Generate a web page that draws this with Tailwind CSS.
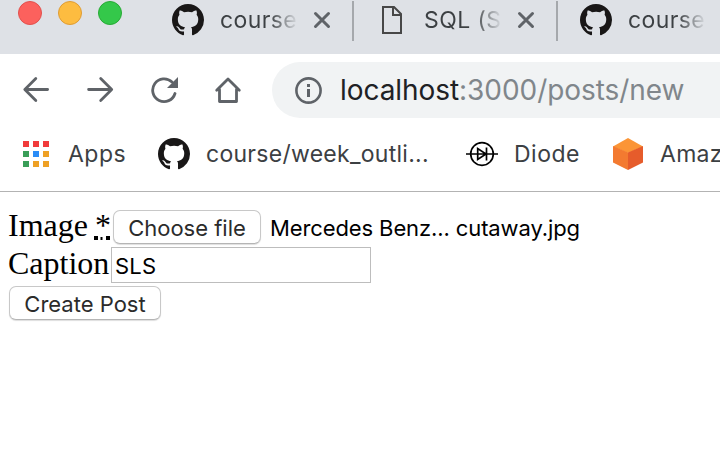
<!DOCTYPE html>
<html lang="en">
<head>
<meta charset="utf-8">
<title>New post</title>
<script src="https://cdn.jsdelivr.net/npm/@tailwindcss/browser@4"></script>
</head>
<body class="w-[720px] h-[470px] overflow-hidden bg-white font-['Inter',sans-serif] text-[#3c4043]">
<svg class="hidden">
  <symbol id="github" viewBox="0 0 16 16"><path fill="#191717" fill-rule="evenodd" d="M8 0C3.58 0 0 3.58 0 8c0 3.54 2.29 6.53 5.47 7.59.4.07.55-.17.55-.38 0-.19-.01-.82-.01-1.49-2.01.37-2.53-.49-2.69-.94-.09-.23-.48-.94-.82-1.13-.28-.15-.68-.52-.01-.53.63-.01 1.08.58 1.23.82.72 1.21 1.87.87 2.33.66.07-.52.28-.87.51-1.07-1.78-.2-3.64-.89-3.64-3.95 0-.87.31-1.59.82-2.15-.08-.2-.36-1.02.08-2.12 0 0 .67-.21 2.2.82.64-.18 1.32-.27 2-.27s1.36.09 2 .27c1.53-1.04 2.2-.82 2.2-.82.44 1.1.16 1.92.08 2.12.51.56.82 1.27.82 2.15 0 3.07-1.87 3.75-3.65 3.95.29.25.54.73.54 1.48 0 1.07-.01 1.93-.01 2.2 0 .21.15.46.55.38A8.01 8.01 0 0 0 16 8c0-4.42-3.58-8-8-8z"/></symbol>
  <symbol id="close" viewBox="0 0 18 18"><path d="M2.500 2.500 15.500 15.500M15.500 2.500 2.500 15.500" stroke="#5f6368" stroke-width="3" stroke-linecap="round"/></symbol>
</svg>

<header class="flex h-[54px] w-full overflow-hidden bg-[#dee1e6]">
  <div class="flex w-[172px] shrink-0 gap-4 pt-px pl-[18px]">
    <span class="size-6 rounded-full border border-[#e2504d] bg-[#fc615d]"></span>
    <span class="size-6 rounded-full border border-[#df9c34] bg-[#fdbc40]"></span>
    <span class="size-6 rounded-full border border-[#27aa35] bg-[#34c84a]"></span>
  </div>
  <div class="flex h-10 w-[180px] shrink-0 items-center">
    <svg class="size-8 shrink-0"><use href="#github"/></svg>
    <span class="ml-4 w-[80px] overflow-hidden whitespace-nowrap bg-linear-to-r from-[#3c4043] from-62% to-transparent to-98% bg-clip-text text-[23px] leading-8 tracking-[0.4px] text-transparent">course</span>
    <svg class="ml-[13px] size-[18px] shrink-0"><use href="#close"/></svg>
  </div>
  <div class="mt-px h-10 w-[2px] shrink-0 bg-[#a5a8ac]"></div>
  <div class="flex h-10 w-[202px] shrink-0 items-center pl-7">
    <svg class="h-7 w-5 shrink-0" viewBox="0 0 20 28" fill="none" stroke="#474747" stroke-width="2"><path d="M1 1H12L19 8V27H1ZM11 1V9H19"/></svg>
    <span class="ml-[22px] w-[80px] overflow-hidden whitespace-nowrap bg-linear-to-r from-[#3c4043] from-62% to-transparent to-98% bg-clip-text text-[23px] leading-8 tracking-[0.4px] text-transparent">SQL (S</span>
    <svg class="ml-[13px] size-[18px] shrink-0"><use href="#close"/></svg>
  </div>
  <div class="mt-px h-10 w-[2px] shrink-0 bg-[#a5a8ac]"></div>
  <div class="flex h-10 shrink-0 items-center pl-[22px]">
    <svg class="size-8 shrink-0"><use href="#github"/></svg>
    <span class="ml-4 w-[80px] overflow-hidden whitespace-nowrap bg-linear-to-r from-[#3c4043] from-62% to-transparent to-98% bg-clip-text text-[23px] leading-8 tracking-[0.4px] text-transparent">course</span>
  </div>
</header>

<nav class="flex h-[72px] w-full items-center overflow-hidden pl-[22px]">
  <svg class="h-7 w-[220px] shrink-0" viewBox="0 0 220 28" fill="none" stroke="#5f6368" stroke-width="2.800" stroke-linecap="round" stroke-linejoin="round">
    <path d="M13.800 2.600 2.800 13.500 13.800 24.400M3 13.500H25.600"/>
    <path d="M78.700 2.600 89.700 13.500 78.700 24.400M89.500 13.500H66.600"/>
    <path d="M153 17.500A11.400 11.400 0 1 1 150 6"/>
    <path d="M156 1V12H145Z" fill="#5f6368" stroke="none"/>
    <path d="M194.700 14.300 206 3 217.300 14.300M197.500 13.500V25.500H214.500V13.500"/>
  </svg>
  <div class="ml-[30px] flex h-14 flex-1 items-center rounded-l-full bg-[#f1f3f4] pl-[23px]">
    <svg class="size-7 shrink-0" viewBox="0 0 28 28"><circle cx="13.500" cy="14.500" r="12.100" fill="none" stroke="#5f6368" stroke-width="2.600"/><path d="M12 8h3v3h-3zM12 13h3v8h-3z" fill="#5f6368"/></svg>
    <span class="ml-[17px] whitespace-nowrap text-[28px] leading-8 tracking-[-0.06px] text-[#80868b]"><span class="text-[#202124]">localhost</span>:3000/posts/new</span>
  </div>
</nav>

<div class="flex h-[66px] w-full items-center overflow-hidden border-b border-[#b3b3b3] pb-[10px] pl-[23px] text-[23px] leading-8 tracking-[0.28px] whitespace-nowrap">
  <div class="grid size-[26px] shrink-0 grid-cols-3 gap-1">
    <i class="bg-[#f13b3b]"></i><i class="bg-[#f13b3b]"></i><i class="bg-[#f13b3b]"></i>
    <i class="bg-[#3a9e58]"></i><i class="bg-[#2a8cf7]"></i><i class="bg-[#eea024]"></i>
    <i class="bg-[#3a9e58]"></i><i class="bg-[#eea024]"></i><i class="bg-[#eea024]"></i>
  </div>
  <span class="ml-[19px] w-[90px] shrink-0 tracking-[0.5px]">Apps</span>
  <svg class="size-8 shrink-0"><use href="#github"/></svg>
  <span class="ml-4 w-[260px] shrink-0">course/week_outli...</span>
  <svg class="size-8 shrink-0" viewBox="0 0 32 32" fill="none" stroke="#000" stroke-width="1.700"><circle cx="16" cy="16" r="11.300"/><path d="M0 16H32M11.700 10.500V21.500L20 16ZM20.500 9.500V22.500"/></svg>
  <span class="ml-4 w-[98px] shrink-0 tracking-[0.5px]">Diode</span>
  <svg class="size-8 shrink-0" viewBox="0 0 32 32"><path d="M16 0 31 8.500 16 15 1 8.500Z" fill="#fb9536"/><path d="M1 8 16 14.500V32L1 24.500Z" fill="#f37a30"/><path d="M31 8 16 14.500V32L31 24.500Z" fill="#e65c2b"/></svg>
  <span class="ml-4">Amaz</span>
</div>

<main class="pt-4 pl-2 text-black">
  <div class="flex h-[38px] items-start">
    <label class="-mt-px w-[105px] shrink-0 whitespace-nowrap font-['Liberation_Serif',serif] text-[32px] leading-[37px]"><span class="inline-block w-[86px]">Image</span><span class="relative inline-block w-[17px] text-right">*<svg class="absolute bottom-[4px] left-0 h-1 w-4" viewBox="0 0 16 4"><path d="M0 0h4v4H0zM6.500 1h2v3h-2zM12 0h4v4h-4z"/></svg></span></label>
    <button class="mt-[2px] h-[34px] w-[148px] rounded-[7px] border border-[#c8c8c8] border-b-[#b5b5b5] bg-white pt-px text-[22px] leading-8 whitespace-nowrap text-[#2b2b2b] shadow-[0_1px_1px_#0002]">Choose file</button>
    <span class="mt-1 ml-[9px] text-[22px] leading-8 tracking-[-0.11px] whitespace-nowrap">Mercedes Benz... cutaway.jpg</span>
  </div>
  <div class="flex h-[38px] items-start">
    <label class="-mt-px w-[103px] shrink-0 font-['Liberation_Serif',serif] text-[32px] leading-[37px]">Caption</label>
    <input class="mt-px h-9 w-[260px] border border-[#bdbdbd] bg-white px-[3px] pt-[2px] text-[22px] leading-8 tracking-[0.2px]" value="SLS">
  </div>
  <button class="mt-[2px] ml-px block h-[34px] w-[152px] rounded-[7px] border border-[#c8c8c8] border-b-[#b5b5b5] bg-white pt-px text-[22px] leading-8 whitespace-nowrap text-[#2b2b2b] shadow-[0_1px_1px_#0002]">Create Post</button>
</main>
</body>
</html>
